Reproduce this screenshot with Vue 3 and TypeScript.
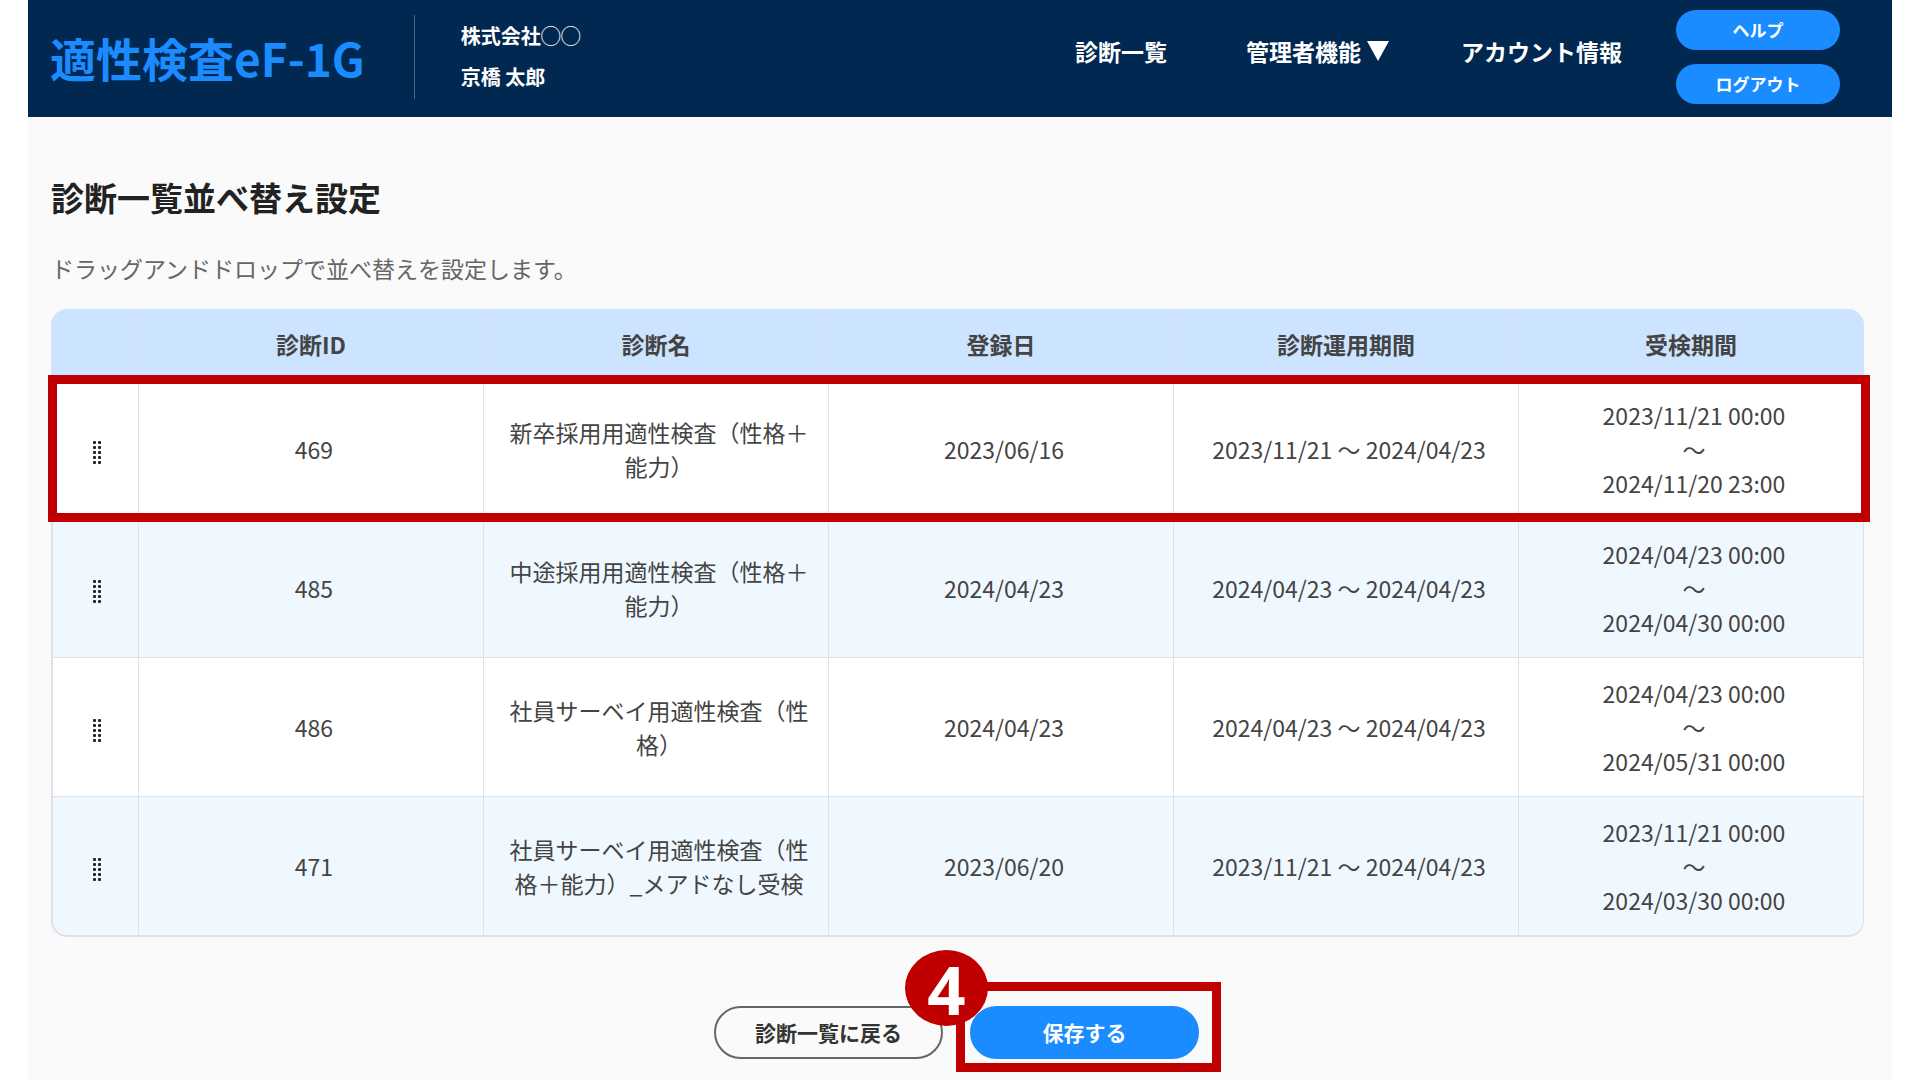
<script setup lang="ts">
interface Assessment {
  id: number
  name: string
  registered: string
  operation: [string, string]
  exam: [string, string]
  highlighted?: boolean
}

const columns: string[] = ['診断ID', '診断名', '登録日', '診断運用期間', '受検期間']

const assessments: Assessment[] = [
  {
    id: 469,
    name: '新卒採用用適性検査（性格＋能力）',
    registered: '2023/06/16',
    operation: ['2023/11/21', '2024/04/23'],
    exam: ['2023/11/21 00:00', '2024/11/20 23:00'],
    highlighted: true,
  },
  {
    id: 485,
    name: '中途採用用適性検査（性格＋能力）',
    registered: '2024/04/23',
    operation: ['2024/04/23', '2024/04/23'],
    exam: ['2024/04/23 00:00', '2024/04/30 00:00'],
  },
  {
    id: 486,
    name: '社員サーベイ用適性検査（性格）',
    registered: '2024/04/23',
    operation: ['2024/04/23', '2024/04/23'],
    exam: ['2024/04/23 00:00', '2024/05/31 00:00'],
  },
  {
    id: 471,
    name: '社員サーベイ用適性検査（性格＋能力）_メアドなし受検',
    registered: '2023/06/20',
    operation: ['2023/11/21', '2024/04/23'],
    exam: ['2023/11/21 00:00', '2024/03/30 00:00'],
  },
]

const gripRows = [0, 5, 10, 15, 20]
</script>

<template>
  <div class="page">
    <header class="header">
      <a class="logo" href="#">適性検査eF-1G</a>
      <div class="account">
        <span>株式会社◯◯</span>
        <span>京橋 太郎</span>
      </div>
      <nav class="nav">
        <a href="#">診断一覧</a>
        <a class="has-menu" href="#">管理者機能<svg class="caret" viewBox="0 0 22 20" aria-hidden="true"><path d="M0 0H22L11 20Z" /></svg></a>
        <a href="#">アカウント情報</a>
      </nav>
      <div class="header-buttons">
        <button type="button">ヘルプ</button>
        <button type="button">ログアウト</button>
      </div>
    </header>

    <main class="main">
      <h1>診断一覧並べ替え設定</h1>
      <p class="lead">ドラッグアンドドロップで並べ替えを設定します。</p>

      <table class="list">
        <thead>
          <tr>
            <th class="grip-col" aria-label="並べ替え"></th>
            <th v-for="column in columns" :key="column" scope="col">{{ column }}</th>
          </tr>
        </thead>
        <tbody>
          <tr v-for="item in assessments" :key="item.id" draggable="true">
            <td class="grip-col">
              <svg class="grip" viewBox="0 0 8 23" aria-hidden="true">
                <template v-for="y in gripRows" :key="y">
                  <rect x="0" :y="y" width="3" height="3" rx="1" />
                  <rect x="5" :y="y" width="3" height="3" rx="1" />
                </template>
              </svg>
              <span v-if="item.highlighted" class="row-frame"></span>
            </td>
            <td>{{ item.id }}</td>
            <td>{{ item.name }}</td>
            <td>{{ item.registered }}</td>
            <td>{{ item.operation[0] }} ～ {{ item.operation[1] }}</td>
            <td>{{ item.exam[0] }}<br />～<br />{{ item.exam[1] }}</td>
          </tr>
        </tbody>
      </table>

      <div class="actions">
        <button type="button" class="back">診断一覧に戻る</button>
        <div class="save-step">
          <button type="button" class="save">保存する</button>
          <span class="save-frame"></span>
          <span class="step">4</span>
        </div>
      </div>
    </main>
  </div>
</template>

<style>
body {
  margin: 0;
  background: #fff;
}
</style>

<style scoped>
.page {
  box-sizing: border-box;
  min-height: 100vh;
  margin: 0 28px;
  background: #fafafa;
  color: #444;
  font-family: 'Noto Sans CJK JP', sans-serif;
  font-size: 23px;
  line-height: 34px;
}

button {
  font-family: inherit;
  cursor: pointer;
}

.header {
  display: flex;
  align-items: center;
  box-sizing: border-box;
  height: 117px;
  padding: 0 52px 4px 22px;
  background: #002850;
  color: #fff;
}

.logo {
  color: #1a8cff;
  font-size: 46px;
  font-weight: 700;
  line-height: 56px;
  text-decoration: none;
  white-space: nowrap;
}

.account {
  display: flex;
  flex-direction: column;
  justify-content: center;
  gap: 7px;
  box-sizing: border-box;
  height: 84px;
  margin-left: 49px;
  padding-left: 46px;
  border-left: 1px solid #4a6582;
  font-size: 20px;
  font-weight: 700;
  white-space: nowrap;
}

.nav {
  display: flex;
  margin-left: auto;
  margin-right: 54px;
  padding-bottom: 12px;
  font-weight: 700;
}

.nav a {
  color: #fff;
  text-decoration: none;
  white-space: nowrap;
}

.nav a + a {
  margin-left: 72px;
}

.nav a + .has-menu {
  display: flex;
  align-items: center;
  gap: 6px;
  margin-left: 79px;
}

.caret {
  width: 22px;
  height: 20px;
  fill: #fff;
}

.header-buttons {
  display: flex;
  flex-direction: column;
  gap: 14px;
}

.header-buttons button {
  width: 164px;
  height: 40px;
  padding: 0;
  border: 0;
  border-radius: 20px;
  background: #1a8cff;
  color: #fff;
  font-size: 17px;
  font-weight: 700;
}

.main {
  padding: 56px 28px 8px 23px;
}

h1 {
  margin: 0;
  color: #222;
  font-size: 33px;
  font-weight: 700;
  line-height: 48px;
}

.lead {
  margin: 30px 0 24px;
  color: #666;
}

.list {
  width: 100%;
  table-layout: fixed;
  border-collapse: separate;
  border-spacing: 0;
  text-align: center;
}

th {
  box-sizing: border-box;
  height: 71px;
  padding: 0 0 1px;
  border-right: 1px solid #d3e3f3;
  border-bottom: 1px solid #dee6ee;
  background: #cce4ff;
  font-weight: 700;
}

th:first-child {
  border-top-left-radius: 16px;
}

th:last-child {
  border-top-right-radius: 16px;
}

td {
  box-sizing: border-box;
  height: 139px;
  padding: 0 16px 0 22px;
  border-right: 1px solid #dee2e6;
  border-bottom: 1px solid #dee2e6;
  background: #fff;
}

td:first-child {
  border-left: 2px solid #dee2e6;
}

tr:nth-child(even) td {
  background: #f0f8ff;
}

tr:last-child td {
  height: 140px;
  border-bottom-width: 2px;
}

tr:last-child td:first-child {
  border-bottom-left-radius: 16px;
}

tr:last-child td:last-child {
  border-bottom-right-radius: 16px;
}

.grip-col {
  width: 88px;
}

td.grip-col {
  padding: 6px 18px 0 20px;
}

.grip {
  display: block;
  width: 8px;
  height: 23px;
  margin: 0 auto;
  fill: #222;
}

tbody tr {
  position: relative;
}

.row-frame {
  position: absolute;
  z-index: 1;
  inset: -5px -6px -3px -3px;
  border: 9px solid #c00000;
  pointer-events: none;
}

.actions {
  display: flex;
  justify-content: center;
  gap: 27px;
  margin: 69px 2px 0 0;
}

.actions button {
  width: 229px;
  height: 53px;
  padding: 0 0 2px;
  border: 2px solid #666;
  border-radius: 27px;
  background: #fafafa;
  color: #333;
  font-size: 21px;
  font-weight: 700;
}

.actions .save {
  border-color: #1a8cff;
  background: #1a8cff;
  color: #fff;
}

.save-step {
  position: relative;
  display: flex;
}

.save-frame {
  position: absolute;
  inset: -24px -22px -13px -14px;
  border: 9px solid #c00000;
  pointer-events: none;
}

.step {
  position: absolute;
  top: -56px;
  left: -65px;
  width: 83px;
  height: 76px;
  border-radius: 50%;
  background: #c00000;
  color: #fff;
  font-family: 'Noto Sans', sans-serif;
  font-size: 67px;
  font-weight: 700;
  line-height: 78px;
  text-align: center;
}
</style>
